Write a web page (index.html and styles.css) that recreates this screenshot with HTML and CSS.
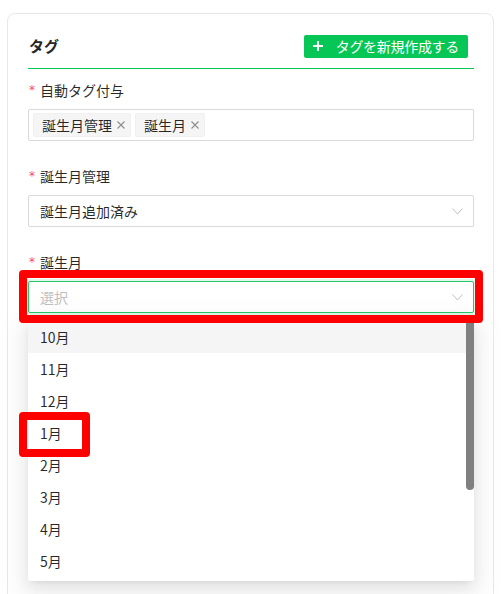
FILE: index.html
```html
<!DOCTYPE html>
<html lang="ja">
<head>
  <meta charset="UTF-8">
  <meta name="viewport" content="width=device-width, initial-scale=1.0">
  <title>タグ設定</title>
  <link rel="stylesheet" href="styles.css">
</head>
<body>

<div class="page">
  <div class="card">
    <div class="card-head">
      <h2>タグ</h2>
      <button class="btn-create">
        <svg class="btn-plus" width="10" height="10" viewBox="0 0 10 10"><path d="M5 0V10M0 5H10" stroke="#fff" stroke-width="2"/></svg>
        タグを新規作成する
      </button>
    </div>

    <div class="form-item">
      <label class="form-label"><span class="req">*</span>自動タグ付与</label>
      <div class="select select-multi">
        <span class="tag">誕生月管理<svg class="tag-close" width="8" height="8" viewBox="0 0 8 8"><path d="M0.5 0.5L7.5 7.5M7.5 0.5L0.5 7.5" stroke="#8c8c8c" stroke-width="1.1"/></svg></span>
        <span class="tag">誕生月<svg class="tag-close" width="8" height="8" viewBox="0 0 8 8"><path d="M0.5 0.5L7.5 7.5M7.5 0.5L0.5 7.5" stroke="#8c8c8c" stroke-width="1.1"/></svg></span>
      </div>
    </div>

    <div class="form-item">
      <label class="form-label"><span class="req">*</span>誕生月管理</label>
      <div class="select">
        <span class="select-value">誕生月追加済み</span>
        <svg class="arrow" width="11" height="7" viewBox="0 0 11 7"><path d="M0.5 0.5L5.5 6L10.5 0.5" fill="none" stroke="#bfbfbf" stroke-width="1"/></svg>
      </div>
    </div>

    <div class="form-item">
      <label class="form-label"><span class="req">*</span>誕生月</label>
      <div class="select-wrap">
        <div class="select focused">
          <span class="select-placeholder">選択</span>
          <svg class="arrow" width="11" height="7" viewBox="0 0 11 7"><path d="M0.5 0.5L5.5 6L10.5 0.5" fill="none" stroke="#bfbfbf" stroke-width="1"/></svg>
        </div>
        <div class="mark mark-select"></div>
        <div class="dropdown">
          <div class="option active">10月</div>
          <div class="option">11月</div>
          <div class="option">12月</div>
          <div class="option">1月</div>
          <div class="option">2月</div>
          <div class="option">3月</div>
          <div class="option">4月</div>
          <div class="option">5月</div>
          <div class="scroll-thumb"></div>
          <div class="mark mark-option"></div>
        </div>
      </div>
    </div>
  </div>
</div>

</body>
</html>
```

FILE: styles.css
```css
body {
  margin: 0;
  padding: 0;
  background-color: #fff;
  font-family: "Noto Sans CJK JP", "Noto Sans", sans-serif;
  font-size: 14px;
  color: rgba(0,0,0,0.85);
  overflow: hidden;
}
.page {
  padding: 13px 7px 0 7px;
}
.card {
  min-height: 640px;
  padding: 20px 19px 0 20px;
  border: 1px solid #e8e8e8;
  border-radius: 8px;
  background-color: #fff;
}
.card-head {
  display: flex;
  justify-content: space-between;
  align-items: center;
  height: 24px;
  padding-bottom: 10px;
  border-bottom: 1px solid #06c755;
}
.card-head h2 {
  margin: 0 0 0 1px;
  font-size: 15px;
  font-weight: bold;
  line-height: 22px;
  color: #262626;
}
.btn-create {
  display: flex;
  align-items: center;
  height: 23px;
  margin-right: 6px;
  padding: 0 9px 0 9px;
  border: none;
  border-radius: 2px;
  background-color: #06c755;
  color: #fff;
  font-family: inherit;
  font-size: 14px;
  letter-spacing: -0.3px;
  line-height: 23px;
}
.btn-plus {
  margin-right: 13px;
}
.form-item {
  margin-top: 10px;
  margin-bottom: 24px;
}
.form-item + .form-item {
  margin-top: 0;
}
.form-label {
  display: flex;
  align-items: center;
  height: 22px;
  padding-bottom: 8px;
  line-height: 22px;
}
.req {
  margin-left: 1px;
  margin-right: 5px;
  color: #ff4d4f;
  font-family: "DejaVu Sans", sans-serif;
  font-size: 12px;
}
.select {
  box-sizing: border-box;
  display: flex;
  align-items: center;
  height: 32px;
  padding: 0 11px;
  border: 1px solid #d9d9d9;
  border-radius: 2px;
  background-color: #fff;
}
.select-multi {
  padding: 0 4px;
  gap: 4px;
}
.tag {
  box-sizing: border-box;
  display: flex;
  align-items: center;
  height: 24px;
  padding: 0 5px 0 8px;
  border: 1px solid #f0f0f0;
  border-radius: 2px;
  background-color: #f5f5f5;
  line-height: 22px;
}
.tag-close {
  margin-left: 5px;
}
.select-value,
.select-placeholder {
  flex: 1;
}
.select-placeholder {
  color: #bfbfbf;
}
.arrow {
  margin-right: -1px;
}
.select.focused {
  border-color: #25c96a;
  box-shadow: 0 0 0 2px rgba(6,199,85,0.12);
}
.select-wrap {
  position: relative;
}
.dropdown {
  position: absolute;
  top: 36px;
  left: 0;
  right: 0;
  padding: 4px 0;
  border-radius: 2px;
  background-color: #fff;
  box-shadow: 0 3px 6px -4px rgba(0,0,0,0.12), 0 6px 16px 0 rgba(0,0,0,0.08), 0 9px 28px 8px rgba(0,0,0,0.05);
  z-index: 1;
}
.option {
  height: 32px;
  padding: 0 12px;
  line-height: 32px;
  color: rgba(0,0,0,0.85);
}
.option.active {
  background-color: #f5f5f5;
}
.scroll-thumb {
  position: absolute;
  top: 0;
  right: 0;
  width: 8px;
  height: 173px;
  border-radius: 0 0 4px 4px;
  background-color: #808080;
}
.mark {
  position: absolute;
  box-sizing: border-box;
  border: 8px solid #ff0000;
  border-radius: 4px;
  z-index: 2;
}
.mark-select {
  top: -11px;
  left: -9px;
  width: 464px;
  height: 53px;
}
.mark-option {
  top: 95px;
  left: -9px;
  width: 71px;
  height: 45px;
}
```
